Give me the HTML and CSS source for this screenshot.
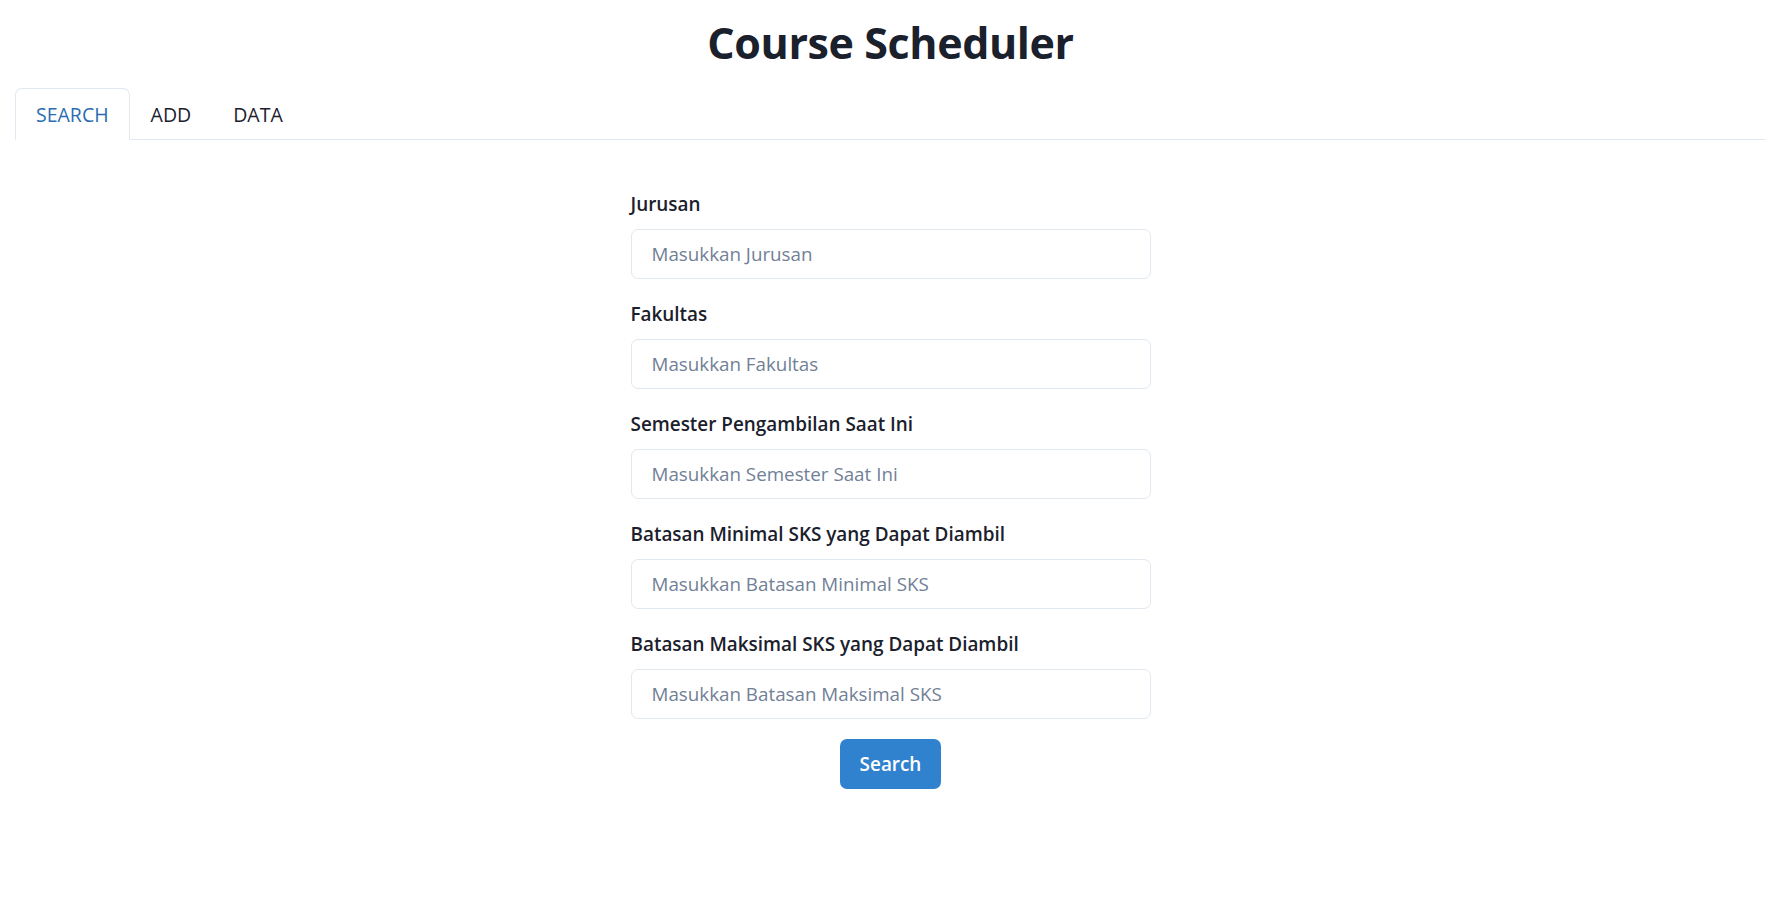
FILE: index.html
```html
<!DOCTYPE html>
<html lang="id">
<head>
<meta charset="utf-8">
<title>Course Scheduler</title>
<link rel="stylesheet" href="styles.css">
</head>
<body>
<div class="app">
  <h1 class="title">Course Scheduler</h1>
  <div class="tabs">
    <div class="tablist">
      <button class="tab tab-active">SEARCH</button>
      <button class="tab">ADD</button>
      <button class="tab">DATA</button>
    </div>
    <div class="panel">
      <form class="form">
        <div class="field">
          <label class="label">Jurusan</label>
          <input class="input" type="text" placeholder="Masukkan Jurusan">
        </div>
        <div class="field">
          <label class="label">Fakultas</label>
          <input class="input" type="text" placeholder="Masukkan Fakultas">
        </div>
        <div class="field">
          <label class="label">Semester Pengambilan Saat Ini</label>
          <input class="input" type="text" placeholder="Masukkan Semester Saat Ini">
        </div>
        <div class="field">
          <label class="label">Batasan Minimal SKS yang Dapat Diambil</label>
          <input class="input" type="text" placeholder="Masukkan Batasan Minimal SKS">
        </div>
        <div class="field">
          <label class="label">Batasan Maksimal SKS yang Dapat Diambil</label>
          <input class="input" type="text" placeholder="Masukkan Batasan Maksimal SKS">
        </div>
        <div class="actions">
          <button class="btn" type="button">Search</button>
        </div>
      </form>
    </div>
  </div>
</div>
</body>
</html>
```
FILE: styles.css
```css
* { box-sizing: border-box; }
html, body { margin: 0; padding: 0; background: #fff; }
body {
  font-family: "Open Sans", "Noto Sans", sans-serif;
  color: #1A202C;
}
.title {
  margin: 16px 0 18px;
  text-align: center;
  font-size: 43px;
  letter-spacing: -0.4px;
  line-height: 54px;
  font-weight: 700;
  color: #1A202C;
}
.tabs { padding: 0 15px; }
.tablist {
  display: flex;
  border-bottom: 1px solid #E2E8F0;
}
.tab {
  font-family: inherit;
  font-size: 19.5px;
  line-height: 30px;
  padding: 11px 20px 9px;
  margin-bottom: -1px;
  border: 1px solid transparent;
  border-radius: 7px 7px 0 0;
  background: transparent;
  color: #1A202C;
  cursor: pointer;
}
.tab-active {
  color: #2B6CB0;
  border-color: #E2E8F0;
  border-bottom-color: #fff;
  background: #fff;
}
.panel { padding: 49px 0 40px; }
.form {
  width: 520px;
  margin: 0 auto;
  display: flex;
  flex-direction: column;
  gap: 20px;
}
.field { display: flex; flex-direction: column; }
.label {
  font-size: 18.9px;
  line-height: 30px;
  font-weight: 600;
  margin-bottom: 10px;
  color: #1A202C;
}
.input {
  height: 50px;
  width: 100%;
  padding: 0 20px;
  font-family: inherit;
  font-size: 18.8px;
  color: #1A202C;
  border: 1px solid #E2E8F0;
  border-radius: 7px;
  outline: none;
  background: #fff;
}
.input::placeholder { color: #718096; opacity: 1; }
.actions { display: flex; justify-content: center; }
.btn {
  height: 50px;
  padding: 0 20px;
  font-family: inherit;
  font-size: 18.9px;
  font-weight: 600;
  color: #fff;
  background: #3182CE;
  border: none;
  border-radius: 7px;
  cursor: pointer;
}
```
